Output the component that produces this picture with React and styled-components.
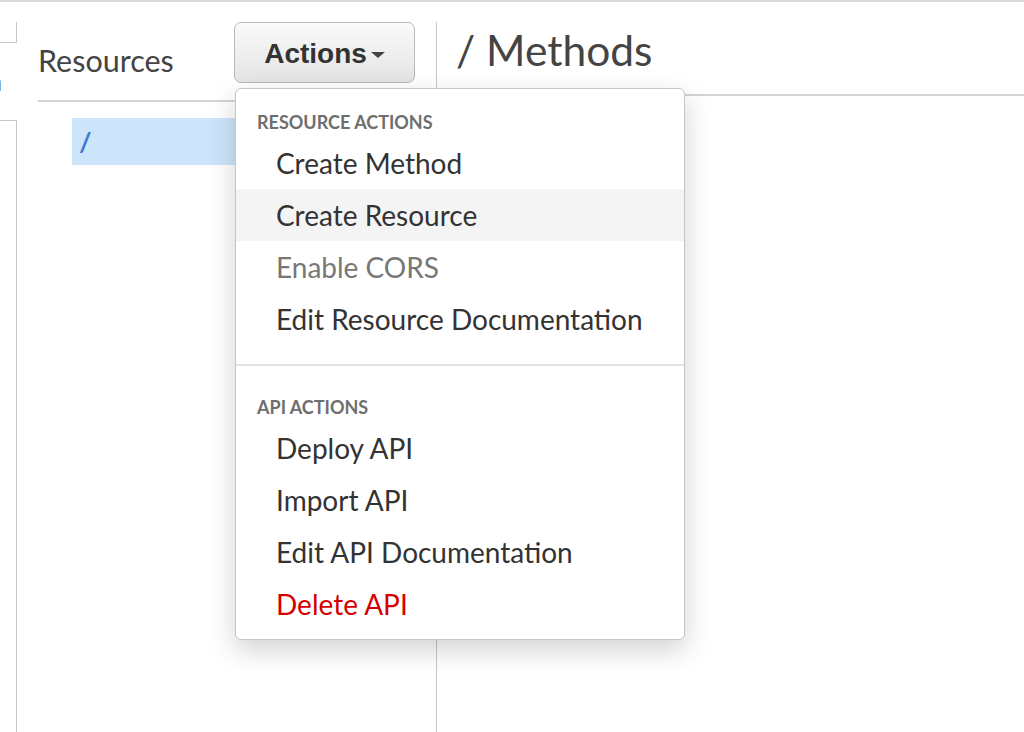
import React from 'react';
import styled, { createGlobalStyle } from 'styled-components';

const GlobalStyle = createGlobalStyle`
  html, body {
    margin: 0;
    padding: 0;
    background: #fff;
  }
  body {
    font-family: Lato, "Open Sans", sans-serif;
    color: #333;
  }
`;

const Page = styled.div`
  display: flex;
  flex-direction: column;
  min-height: 100vh;
  border-top: 2px solid #d9d9d9;
  box-sizing: border-box;
  overflow: hidden;
`;

const Body = styled.div`
  display: flex;
  flex: 1;
  padding-top: 20px;
`;

const LeftRail = styled.div`
  width: 17px;
  display: flex;
  flex-direction: column;
  flex-shrink: 0;
`;

const RailTab = styled.div`
  height: 20px;
  border-right: 1px solid #c8c8c8;
  border-bottom: 1px solid #c8c8c8;
`;

const RailClip = styled.div`
  width: 17px;
  height: 36px;
  margin-top: 20px;
  overflow: hidden;
  font-size: 26px;
  line-height: 36px;
  color: #333;
  span {
    display: inline-block;
    margin-left: -12.5px;
  }
`;

const RailBox = styled.div`
  flex: 1;
  margin-top: 21px;
  border-top: 1px solid #c8c8c8;
  border-right: 1px solid #c8c8c8;
`;

const ResourcesPanel = styled.div`
  width: 420px;
  flex-shrink: 0;
  border-right: 1px solid #c8c8c8;
  box-sizing: border-box;
  padding: 0 21px 0 21px;
`;

const PanelHeader = styled.div`
  position: relative;
  display: flex;
  justify-content: space-between;
  align-items: flex-start;
  height: 78px;
  border-bottom: 2px solid #d3d3d3;
`;

const PanelTitle = styled.div`
  margin-top: 20px;
  font-size: 30.5px;
  line-height: 36px;
  color: #444;
`;

const ActionsButton = styled.button`
  display: flex;
  align-items: center;
  justify-content: center;
  gap: 4px;
  width: 181px;
  height: 61px;
  padding: 3px 0 0;
  border: 1px solid #b9b9b9;
  border-radius: 7px;
  background: linear-gradient(#fafafa, #e4e4e4);
  font-family: "Liberation Sans", Arial, sans-serif;
  font-weight: bold;
  font-size: 28px;
  color: #333;
  cursor: pointer;
`;

const Caret = styled.span`
  width: 0;
  height: 0;
  margin-top: 2px;
  border-left: 7px solid transparent;
  border-right: 7px solid transparent;
  border-top: 6px solid #444;
`;

const Tree = styled.div`
  padding: 16px 0 0 34px;
`;

const TreeRow = styled.div`
  height: 47px;
  display: flex;
  align-items: center;
  padding-left: 7px;
  background: ${p => (p.selected ? '#cde5fb' : 'transparent')};
  color: #3a7bd0;
  font-size: 27px;
  font-weight: bold;
`;

const MainPanel = styled.div`
  flex: 1;
`;

const MainHeader = styled.div`
  height: 72px;
  display: flex;
  align-items: flex-start;
  padding-left: 19px;
  border-bottom: 2px solid #d3d3d3;
`;

const MainTitle = styled.h1`
  margin: 2px 0 0;
  font-weight: normal;
  font-size: 42.5px;
  line-height: 52px;
  color: #444;
`;

const Menu = styled.div`
  position: absolute;
  top: 66px;
  left: 197px;
  width: 450px;
  box-sizing: border-box;
  padding-bottom: 9px;
  background: #fff;
  border: 1px solid #c6c6c6;
  border-radius: 6px;
  box-shadow: 0 10px 28px rgba(0, 0, 0, 0.18);
  z-index: 10;
`;

const MenuHeading = styled.div`
  padding: ${p => (p.first ? '23px' : '31px')} 21px 5px;
  font-size: 18px;
  line-height: 20px;
  font-weight: bold;
  color: #6e6e6e;
  text-transform: uppercase;
`;

const MenuItem = styled.div`
  height: 52px;
  display: flex;
  align-items: center;
  padding-left: 40px;
  font-size: 28px;
  color: ${p => (p.danger ? '#d40000' : p.disabled ? '#777' : '#333')};
  background: ${p => (p.active ? '#f4f4f4' : 'transparent')};
  cursor: ${p => (p.disabled ? 'default' : 'pointer')};
`;

const MenuDivider = styled.div`
  height: 2px;
  margin-top: 19px;
  background: #e4e4e4;
`;

const resourceActions = [
  { label: 'Create Method' },
  { label: 'Create Resource', active: true },
  { label: 'Enable CORS', disabled: true },
  { label: 'Edit Resource Documentation' },
];

const apiActions = [
  { label: 'Deploy API' },
  { label: 'Import API' },
  { label: 'Edit API Documentation' },
  { label: 'Delete API', danger: true },
];

const App = () => {
  return (
    <>
      <GlobalStyle />
      <Page>
        <Body>
          <LeftRail>
            <RailTab />
            <RailClip><span>n</span></RailClip>
            <RailBox />
          </LeftRail>
          <ResourcesPanel>
            <PanelHeader>
              <PanelTitle>Resources</PanelTitle>
              <ActionsButton>
                Actions
                <Caret />
              </ActionsButton>
              <Menu>
                <MenuHeading first>Resource Actions</MenuHeading>
                {resourceActions.map((item) => (
                  <MenuItem key={item.label} active={item.active} disabled={item.disabled}>
                    {item.label}
                  </MenuItem>
                ))}
                <MenuDivider />
                <MenuHeading>API Actions</MenuHeading>
                {apiActions.map((item) => (
                  <MenuItem key={item.label} danger={item.danger}>
                    {item.label}
                  </MenuItem>
                ))}
              </Menu>
            </PanelHeader>
            <Tree>
              <TreeRow selected>/</TreeRow>
            </Tree>
          </ResourcesPanel>
          <MainPanel>
            <MainHeader>
              <MainTitle>/ Methods</MainTitle>
            </MainHeader>
          </MainPanel>
        </Body>
      </Page>
    </>
  );
};

export default App;
